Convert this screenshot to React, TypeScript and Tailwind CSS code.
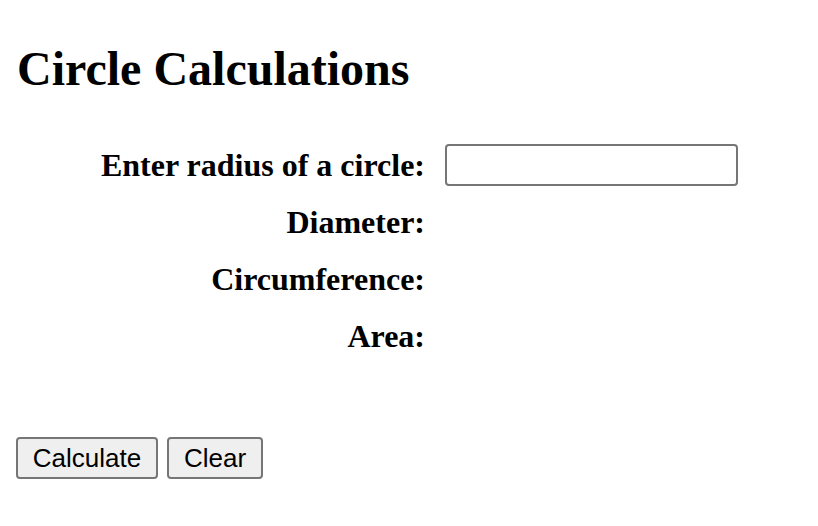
import React from "react";

const serif = { fontFamily: '"Liberation Serif", "Times New Roman", serif' };

export default function App() {
  const rows = ["Enter radius of a circle:", "Diameter:", "Circumference:", "Area:"];
  return (
    <div className="min-h-screen bg-white text-black" style={serif}>
      <h1 className="pl-[17px] pt-[45px] text-[48px] leading-[48px] font-bold">Circle Calculations</h1>
      <div className="mt-[43px] grid grid-cols-[425px_auto] gap-x-[20px] auto-rows-[57px]">
        {rows.map((r, i) => (
          <React.Fragment key={r}>
            <div className="flex items-center justify-end text-[32px] leading-[32px] font-bold">{r}</div>
            <div className="flex items-center">
              {i === 0 ? (
                <input
                  type="text"
                  className="h-[42px] w-[293px] rounded-[4px] border-2 border-[#767676] bg-white px-2 outline-none"
                />
              ) : null}
            </div>
          </React.Fragment>
        ))}
      </div>
      <div
        className="mt-[73px] flex gap-[9px] pl-[16px]"
        style={{ fontFamily: '"Liberation Sans", Arial, sans-serif' }}
      >
        <button className="h-[42px] w-[142px] rounded-[4px] border-2 border-[#767676] bg-[#efefef] text-[26px] leading-none text-black">
          Calculate
        </button>
        <button className="h-[42px] w-[96px] rounded-[4px] border-2 border-[#767676] bg-[#efefef] text-[26px] leading-none text-black">
          Clear
        </button>
      </div>
    </div>
  );
}
